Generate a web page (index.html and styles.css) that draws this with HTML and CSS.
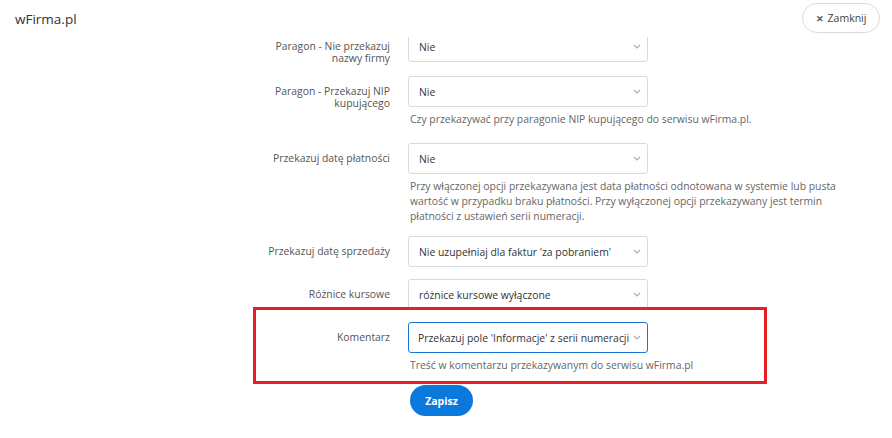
FILE: index.html
```html
<!DOCTYPE html>
<html lang="pl">
<head>
<meta charset="utf-8">
<title>wFirma.pl</title>
<link rel="stylesheet" href="styles.css">
</head>
<body>
<header class="topbar">
  <div class="brand">wFirma.pl</div>
  <button class="close-btn"><span class="close-x">✕</span> Zamknij</button>
</header>
<main class="viewport">
  <form class="settings">
    <div class="row">
      <label class="label">Paragon - Nie przekazuj nazwy firmy</label>
      <div class="field">
        <div class="select"><span>Nie</span><svg class="chev" viewBox="0 0 8 5"><path d="M1 1l3 3 3-3" /></svg></div>
      </div>
    </div>
    <div class="row row-spaced">
      <label class="label">Paragon - Przekazuj NIP kupującego</label>
      <div class="field">
        <div class="select"><span>Nie</span><svg class="chev" viewBox="0 0 8 5"><path d="M1 1l3 3 3-3" /></svg></div>
        <p class="help">Czy przekazywać przy paragonie NIP kupującego do serwisu wFirma.pl.</p>
      </div>
    </div>
    <div class="row">
      <label class="label">Przekazuj datę płatności</label>
      <div class="field">
        <div class="select"><span>Nie</span><svg class="chev" viewBox="0 0 8 5"><path d="M1 1l3 3 3-3" /></svg></div>
        <p class="help">Przy włączonej opcji przekazywana jest data płatności odnotowana w systemie lub pusta wartość w przypadku braku płatności. Przy wyłączonej opcji przekazywany jest termin<br>płatności z ustawień serii numeracji.</p>
      </div>
    </div>
    <div class="row">
      <label class="label">Przekazuj datę sprzedaży</label>
      <div class="field">
        <div class="select"><span>Nie uzupełniaj dla faktur 'za pobraniem'</span><svg class="chev" viewBox="0 0 8 5"><path d="M1 1l3 3 3-3" /></svg></div>
      </div>
    </div>
    <div class="row">
      <label class="label">Różnice kursowe</label>
      <div class="field">
        <div class="select"><span>różnice kursowe wyłączone</span><svg class="chev" viewBox="0 0 8 5"><path d="M1 1l3 3 3-3" /></svg></div>
      </div>
    </div>
    <div class="row row-marked">
      <div class="marker"></div>
      <label class="label">Komentarz</label>
      <div class="field">
        <div class="select select-focus"><span>Przekazuj pole 'Informacje' z serii numeracji</span><svg class="chev" viewBox="0 0 8 5"><path d="M1 1l3 3 3-3" /></svg></div>
        <p class="help">Treść w komentarzu przekazywanym do serwisu wFirma.pl</p>
      </div>
    </div>
    <div class="actions">
      <button type="button" class="save-btn">Zapisz</button>
    </div>
  </form>
</main>
</body>
</html>
```
FILE: styles.css
```css
* { box-sizing: border-box; }
html, body { margin: 0; padding: 0; background: #fff; }
body {
  font-family: "Open Sans", "Noto Sans", sans-serif;
  color: #333;
  width: 892px;
  height: 438px;
  overflow: hidden;
}
.topbar {
  height: 37px;
  display: flex;
  justify-content: space-between;
  align-items: flex-start;
  padding: 3px 12px 0 15px;
  background: #fff;
}
.brand {
  font-size: 13.5px;
  line-height: 20px;
  margin-top: 6px;
  color: #333;
}
.close-btn {
  width: 78px;
  height: 30px;
  border: 1px solid #d9dcdf;
  border-radius: 15px;
  background: #fff;
  font-family: inherit;
  font-size: 10.5px;
  color: #444;
  padding: 0;
  display: flex;
  align-items: center;
  justify-content: center;
  gap: 4px;
}
.close-x { font-size: 9px; color: #555; font-weight: 700; }
.viewport {
  height: 401px;
  overflow: hidden;
}
.settings {
  margin: -6px 0 0 260px;
  width: 610px;
}
.row {
  display: flex;
  gap: 18px;
  margin-bottom: 12px;
  position: relative;
}
.row-spaced { margin-bottom: 16px; }
.label {
  width: 130px;
  flex: none;
  text-align: right;
  font-size: 10.4px;
  line-height: 12px;
  color: #555;
  padding-top: 9px;
}
.field { width: 462px; flex: none; }
.select {
  width: 240px;
  height: 31px;
  border: 1px solid #d7dbe0;
  border-radius: 3px;
  display: flex;
  align-items: center;
  justify-content: space-between;
  padding: 0 6px 0 10px;
  font-size: 10.4px;
  color: #333;
  white-space: nowrap;
}
.select-focus {
  border: 1.5px solid #1a75d2;
  padding-left: 9px;
}
.chev {
  width: 8px;
  height: 5px;
  fill: none;
  stroke: #a9afb6;
  stroke-width: 1.2;
  flex: none;
}
.help {
  margin: 5px 0 0 2px;
  font-size: 10.4px;
  line-height: 15px;
  color: #666;
}
.marker {
  position: absolute;
  left: -7px;
  top: -15px;
  width: 514px;
  height: 77px;
  border: 3px solid #e41f26;
  pointer-events: none;
}
.actions {
  padding-left: 150px;
  margin-top: 9px;
}
.save-btn {
  width: 63px;
  height: 31px;
  border: none;
  border-radius: 16px;
  background: #0b78dc;
  color: #fff;
  font-family: inherit;
  font-weight: 700;
  font-size: 10.5px;
  padding: 0;
}
```
